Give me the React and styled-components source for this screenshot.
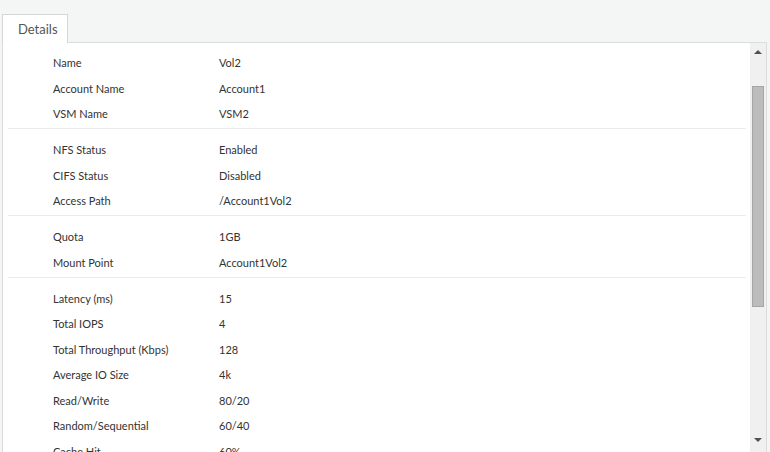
import styled, { createGlobalStyle } from 'styled-components'

const GlobalStyle = createGlobalStyle`
  html, body {
    margin: 0;
    padding: 0;
    height: 100%;
    overflow: hidden;
    background: #f4f5f5;
    font-family: Lato, "Liberation Sans", sans-serif;
  }
`

const Page = styled.div`
  padding: 14px 0 0 2px;
  width: 765px;
`

const TabBar = styled.div`
  display: flex;
  margin-bottom: -1px;
  position: relative;
  z-index: 1;
`

const Tab = styled.div`
  width: 66px;
  height: 29px;
  box-sizing: border-box;
  border: 1px solid #d6d6d6;
  border-bottom: none;
  background: #fff;
  color: #555;
  font-size: 13px;
  padding-left: 15px;
  display: flex;
  align-items: center;
`

const Panel = styled.div`
  display: flex;
  height: 420px;
  background: #fff;
  border: 1px solid #dcdcdc;
  border-bottom: none;
`

const Content = styled.div`
  flex: 1;
  overflow: hidden;
  padding: 0 4px 0 5px;
`

const Section = styled.div`
  padding: 8px 0 1.5px;
  border-bottom: 1px solid #ebebeb;
  &:first-child {
    padding-top: 7px;
  }
  &:last-child {
    border-bottom: none;
  }
`

const Row = styled.div`
  display: flex;
  align-items: center;
  height: 25.5px;
  padding-left: 45px;
  font-size: 11px;
  color: #333;
`

const Label = styled.span`
  width: 166px;
  flex-shrink: 0;
`

const Value = styled.span``

const ScrollBar = styled.div`
  width: 16px;
  background: #f0f0f0;
  display: flex;
  flex-direction: column;
  align-items: center;
  padding-top: 7px;
  box-sizing: border-box;
`

const Arrow = styled.div`
  width: 0;
  height: 0;
  border-left: 4px solid transparent;
  border-right: 4px solid transparent;
  ${({ down }) =>
    down ? 'border-top: 4px solid #505050;' : 'border-bottom: 4px solid #505050;'}
`

const Thumb = styled.div`
  margin-top: 32px;
  width: 12px;
  height: 221px;
  box-sizing: border-box;
  background: #bcbcbc;
  border: 1px solid #a6a6a6;
`

const Spacer = styled.div`
  flex: 1;
`

const BottomArrow = styled.div`
  margin-bottom: 21px;
`

const sections = [
  [
    ['Name', 'Vol2'],
    ['Account Name', 'Account1'],
    ['VSM Name', 'VSM2'],
  ],
  [
    ['NFS Status', 'Enabled'],
    ['CIFS Status', 'Disabled'],
    ['Access Path', '/Account1Vol2'],
  ],
  [
    ['Quota', '1GB'],
    ['Mount Point', 'Account1Vol2'],
  ],
  [
    ['Latency (ms)', '15'],
    ['Total IOPS', '4'],
    ['Total Throughput (Kbps)', '128'],
    ['Average IO Size', '4k'],
    ['Read/Write', '80/20'],
    ['Random/Sequential', '60/40'],
    ['Cache Hit', '60%'],
  ],
]

export default function App() {
  return (
    <Page>
      <GlobalStyle />
      <TabBar>
        <Tab>Details</Tab>
      </TabBar>
      <Panel>
        <Content>
          {sections.map((rows, i) => (
            <Section key={i}>
              {rows.map(([label, value]) => (
                <Row key={label}>
                  <Label>{label}</Label>
                  <Value>{value}</Value>
                </Row>
              ))}
            </Section>
          ))}
        </Content>
        <ScrollBar>
          <Arrow />
          <Thumb />
          <Spacer />
          <BottomArrow>
            <Arrow down />
          </BottomArrow>
        </ScrollBar>
      </Panel>
    </Page>
  )
}
